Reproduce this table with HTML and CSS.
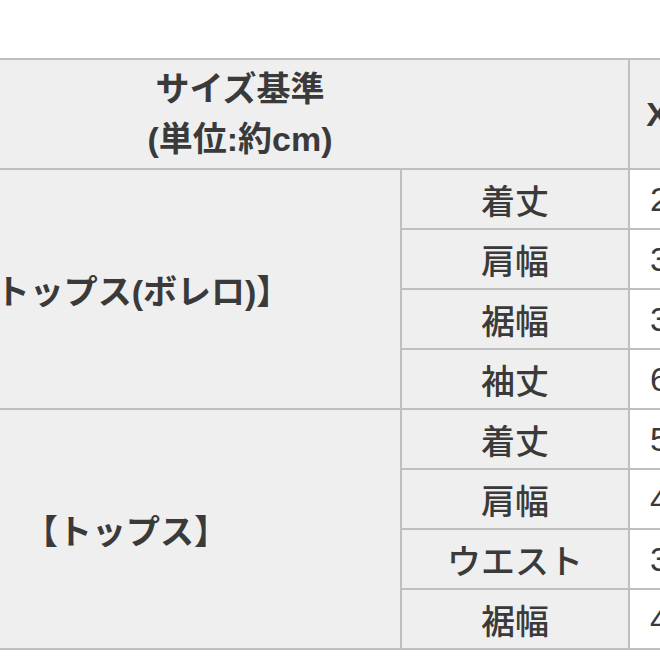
FILE: index.html
```html
<!DOCTYPE html>
<html lang="ja">
<head>
<meta charset="utf-8">
<link rel="stylesheet" href="styles.css">
</head>
<body>
<div class="frame">
  <table class="size-table">
    <colgroup>
      <col class="c-cat">
      <col class="c-item">
      <col class="c-val">
      <col class="c-val">
    </colgroup>
    <thead>
      <tr class="head-row">
        <th colspan="2" class="head-main">サイズ基準<br>(単位:約cm)</th>
        <th class="head-size">XS</th>
        <th class="head-size">S</th>
      </tr>
    </thead>
    <tbody>
      <tr>
        <th rowspan="4" class="cat">【トップス(ボレロ)】</th>
        <th class="item">着丈</th>
        <td class="val">27</td><td class="val">28</td>
      </tr>
      <tr><th class="item">肩幅</th><td class="val">36</td><td class="val">37</td></tr>
      <tr><th class="item">裾幅</th><td class="val">38</td><td class="val">40</td></tr>
      <tr><th class="item">袖丈</th><td class="val">60</td><td class="val">61</td></tr>
      <tr>
        <th rowspan="4" class="cat">【トップス】</th>
        <th class="item">着丈</th>
        <td class="val">52</td><td class="val">53</td>
      </tr>
      <tr><th class="item">肩幅</th><td class="val">40</td><td class="val">41</td></tr>
      <tr><th class="item">ウエスト</th><td class="val">34</td><td class="val">36</td></tr>
      <tr><th class="item">裾幅</th><td class="val">44</td><td class="val">46</td></tr>
    </tbody>
  </table>
</div>
</body>
</html>
```

FILE: styles.css
```css
html, body {
  margin: 0;
  padding: 0;
  background: #ffffff;
}

.frame {
  width: 660px;
  height: 660px;
  overflow: hidden;
  padding-top: 58px;
  box-sizing: border-box;
}

.size-table {
  margin-left: -150px;
  border-collapse: collapse;
  table-layout: fixed;
  width: 938px;
  font-family: "Liberation Sans", "Noto Sans CJK JP", sans-serif;
  color: #3a3a3a;
  font-size: 34px;
}

.c-cat { width: 550px; }
.c-item { width: 228px; }
.c-val { width: 80px; }

.size-table th,
.size-table td {
  border: 2px solid #bfbfbf;
  padding: 0;
  text-align: center;
  vertical-align: middle;
  height: 58px;
  white-space: nowrap;
}

.head-row th {
  background: #efefef;
  font-weight: 700;
  height: 108px;
  line-height: 50px;
}

.cat {
  background: #efefef;
  font-weight: 700;
}

.item {
  background: #efefef;
  font-weight: 500;
}

.val {
  background: #ffffff;
  font-weight: 400;
}
```
